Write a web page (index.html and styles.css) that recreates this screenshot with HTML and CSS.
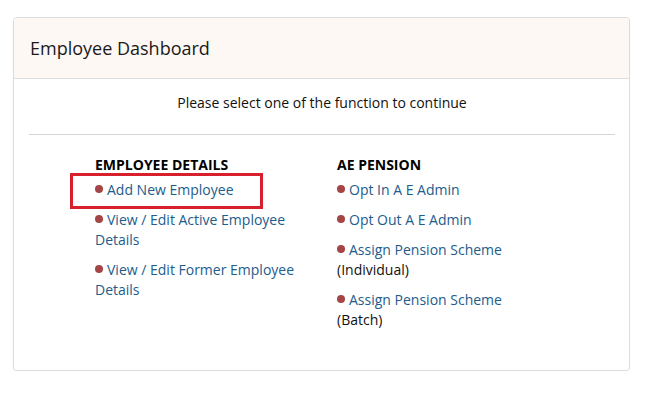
FILE: index.html
```html
<!DOCTYPE html>
<html>
<head>
<meta charset="utf-8">
<link rel="stylesheet" href="styles.css">
</head>
<body>
<div class="card">
  <div class="card-header">Employee Dashboard</div>
  <div class="card-body">
    <p class="intro">Please select one of the function to continue</p>
    <hr class="rule">
    <div class="columns">
      <div class="col col-left">
        <h4 class="col-title">EMPLOYEE DETAILS</h4>
        <ul class="links">
          <li class="item highlighted"><span class="dot"></span><a href="#">Add New Employee</a></li>
          <li class="item"><span class="dot"></span><a href="#">View / Edit Active Employee Details</a></li>
          <li class="item"><span class="dot"></span><a href="#">View / Edit Former Employee Details</a></li>
        </ul>
      </div>
      <div class="col col-right">
        <h4 class="col-title">AE PENSION</h4>
        <ul class="links">
          <li class="item"><span class="dot"></span><a href="#">Opt In A E Admin</a></li>
          <li class="item"><span class="dot"></span><a href="#">Opt Out A E Admin</a></li>
          <li class="item"><span class="dot"></span><a href="#">Assign Pension Scheme</a><br>(Individual)</li>
          <li class="item"><span class="dot"></span><a href="#">Assign Pension Scheme</a><br>(Batch)</li>
        </ul>
      </div>
    </div>
  </div>
</div>
</body>
</html>
```
FILE: styles.css
```css
*, *::before, *::after { box-sizing: border-box; }
html, body { margin: 0; padding: 0; background: #fff; }
body {
  font-family: "Open Sans", "Noto Sans", sans-serif;
  color: #111;
  font-size: 14px;
  padding: 17px 29px 0 13px;
}
.card {
  width: 617px;
  height: 354px;
  border: 1px solid #dcdcdc;
  border-radius: 4px;
  box-shadow: 0 1px 2px rgba(0,0,0,0.06);
  overflow: hidden;
}
.card-header {
  background: #fdf8f4;
  height: 61px;
  border-bottom: 1px solid #dedede;
  padding: 18px 0 0 16px;
  font-size: 18px;
  line-height: 24px;
  color: #1a1a1a;
}
.card-body {
  padding: 14px 14px 0 15px;
}
.intro {
  margin: 0;
  text-align: center;
  font-size: 14px;
  line-height: 20px;
}
.rule {
  margin: 21px 0 0 0;
  border: 0;
  border-top: 1px solid #d4d4d4;
  height: 0;
}
.columns {
  display: flex;
  padding: 20px 0 0 66px;
}
.col-left { width: 242px; padding-right: 22px; }
.col-right { width: 200px; }
.col-title {
  margin: 0;
  font-size: 14px;
  font-weight: 700;
  line-height: 20px;
  color: #000;
}
.links {
  list-style: none;
  margin: 0;
  padding: 0;
}
.item {
  line-height: 20px;
  margin-top: 5px;
  margin-bottom: 5px;
  color: #111;
  position: relative;
}
.item + .item { margin-top: 10px; }
.dot {
  display: inline-block;
  width: 8px;
  height: 8px;
  border-radius: 50%;
  background: #a54545;
  margin-right: 4px;
  vertical-align: 2px;
}
.links a {
  color: #215c8c;
  text-decoration: none;
}
.highlighted::before {
  content: "";
  position: absolute;
  left: -25px;
  top: -7px;
  width: 193px;
  height: 36px;
  border: 3px solid #d8202c;
}
```
